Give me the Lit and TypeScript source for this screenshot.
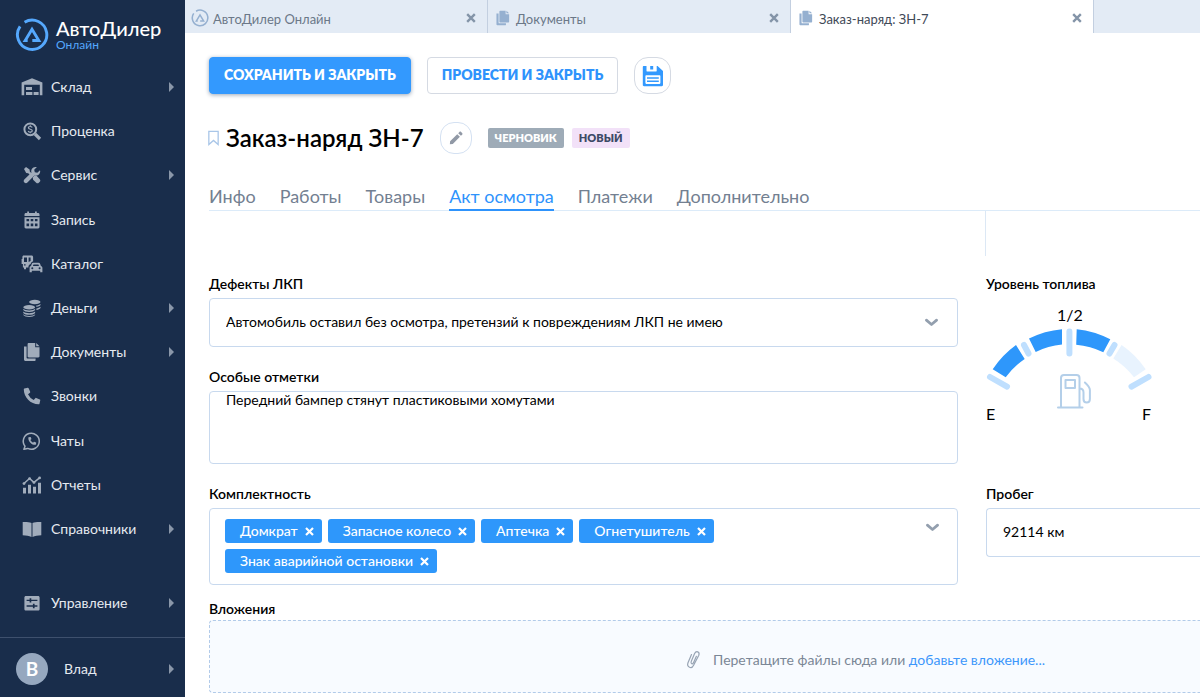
import { LitElement, html, svg, css, nothing } from "lit";
import { customElement, property } from "lit/decorators.js";
import { classMap } from "lit/directives/class-map.js";

const phonePath =
  "M497.39 361.8l-112-48a24 24 0 0 0-28 6.9l-49.6 60.6A370.66 370.66 0 0 1 130.6 204.11l60.6-49.6a23.94 23.94 0 0 0 6.9-28l-48-112A24.16 24.16 0 0 0 122.6.61l-104 24A24 24 0 0 0 0 48c0 256.5 207.9 464 464 464a24 24 0 0 0 23.4-18.6l24-104a24.29 24.29 0 0 0-14.01-27.6z";

// All glyphs share a 22x22 grid and take their colour from the text.
const glyphs: Record<string, unknown> = {
  warehouse: svg`
    <path d="M.6 19.2V6.6L11 2.2l10.400 4.400v12.600h-2.600V8.800H3.200v10.400z"/>
    <path d="M5 11h6v3H5zM5 16h6.400v3H5zM12.600 16h5v3h-5z"/>`,
  search: svg`
    <circle cx="9.300" cy="9.300" r="5.900" fill="none" stroke="currentColor" stroke-width="2"/>
    <path d="M14 14l5 5" stroke="currentColor" stroke-width="3.200" stroke-linecap="butt"/>
    <path d="M11.200 7.500c-.4-.8-1.100-1-1.900-1-1 0-1.900.4-1.900 1.300 0 2 3.900.9 3.900 3 0 .9-.9 1.400-2 1.400-.9 0-1.700-.3-2.100-1.200M9.300 5.300v1.200M9.300 12v1.300" fill="none" stroke="currentColor" stroke-width="1.200"/>`,
  tools: svg`
    <path d="M3 5l2-2 3.600 2.600.2 2 2.900 2.900-1.600 1.600-2.900-2.900-2-.2z"/>
    <path d="M12.600 12.600l1-1 2.200.4 3 3.200c.7.8.7 1.800 0 2.600l-1 1c-.8.700-1.800.7-2.600 0l-3.100-3.100-.4-2.200z"/>
    <path d="M19 6.200l-2.700 2.600-2.500-.6-.6-2.500 2.700-2.600c-2-.6-4.100.1-5.100 1.800-.7 1.200-.7 2.500-.3 3.700l-7.200 6.900c-.8.800-.8 2.100 0 2.900l.2.200c.8.800 2.100.8 2.900 0l7-7.100c1.300.4 2.700.2 3.900-.6 1.600-1.100 2.300-2.900 1.700-4.700z"/>`,
  calendar: svg`
    <path fill-rule="evenodd" d="M3.500 8.300h15v9.700c0 .800-.6 1.400-1.400 1.400H4.900c-.8 0-1.400-.6-1.400-1.400zM5.500 10v2.300h2.600V10zm4.200 0v2.300h2.600V10zm4.200 0v2.300h2.600V10zM5.500 14.500v2.700h2.600v-2.700zm4.200 0v2.700h2.600v-2.700zm4.200 0v2.700h2.600v-2.700z"/>
    <path d="M3.500 7V5.400c0-.8.600-1.400 1.400-1.400h1.300V2.400h1.800V4h6V2.400h1.800V4h1.300c.8 0 1.400.6 1.400 1.400V7z"/>`,
  cars: svg`
    <path fill-rule="evenodd" d="M2.700 2.400h7.800c1 0 1.600.7 1.600 1.600v4.200c-1.300.5-2 1.500-2.500 2.700-1.500.6-2.200 1.600-2.200 3.200v.4H5v1.700H3v-1.700H1.900V11H.6V6h.8V4c0-.9.4-1.600 1.300-1.600zM3 4.600V9h3V4.600zm4.600 0V9l2-.900V4.600zM3 11.300v1.300h1.600v-1.300z"/>
    <path fill-rule="evenodd" d="M12.300 9.700h5.200c.8 0 1.400.4 1.700 1.200l.7 2c.9.300 1.500 1 1.500 1.900v4.400h-2.200v-1.500h-8.400v1.500H8.600v-4.400c0-.9.500-1.600 1.400-1.900l.7-2c.3-.8.8-1.200 1.600-1.200zm.2 1.700l-.6 1.600h6.100l-.6-1.600zM11.300 14.200a1 1 0 1 0 0 2 1 1 0 0 0 0-2zm7.300 0a1 1 0 1 0 0 2 1 1 0 0 0 0-2z"/>`,
  coins: svg`
    <ellipse cx="13.800" cy="5" rx="5.700" ry="2.200"/>
    <ellipse cx="8.200" cy="10.200" rx="5.900" ry="2.200"/>
    <path d="M2.300 11.800c2 2.100 9.800 2.100 11.800 0v1.300c-1.500 2.600-10.300 2.600-11.800 0zM2.300 14.600c2 2.100 9.800 2.100 11.800 0v1.300c-1.500 2.600-10.300 2.600-11.800 0zM2.300 17.300c2 2.100 9.800 2.100 11.800 0v.700c-1.500 2.600-10.300 2.600-11.800 0zM15.200 8.500c1.800-.2 3.400-.7 4.300-1.600v1.200c-.6 1-2.100 1.600-4 1.900zM15.400 11.400c1.700-.2 3.200-.7 4.100-1.600V11c-.6 1-2.200 1.700-4.100 2z"/>`,
  copy: svg`
    <path d="M7.800 2h6.400v4.300h4.300v8.900c0 .700-.5 1.200-1.200 1.200H7.800c-.7 0-1.200-.5-1.200-1.200v-12C6.600 2.500 7.100 2 7.800 2z"/>
    <path d="M15.200 2l3.300 3.300h-3.300zM3.200 5.400h2.400v11.400c0 .4.300.7.700.7h8.300v1.700c0 .500-.4.800-.8.800H4.500c-.8 0-1.500-.7-1.500-1.500V5.600z"/>`,
  phone: svg`<path transform="translate(2.800 2.800) scale(.0322)" d="${phonePath}"/>`,
  chat: svg`
    <path d="M4 16.200A8 8 0 1 1 6.700 18.400L2.900 19.300z" fill="none" stroke="currentColor" stroke-width="1.500" stroke-linejoin="round"/>
    <path transform="translate(7.300 6.900) scale(.0155)" d="${phonePath}"/>`,
  chart: svg`
    <path d="M2 13.700h3v5.700H2zM7 10.700h3v8.700H7zM12 12.700h3v6.700h-3zM17 8.700h3v10.700h-3z"/>
    <path d="M2.600 9.800l6-5.400 4.300 4 5.700-4.600" fill="none" stroke="currentColor" stroke-width="1.500"/>
    <circle cx="3" cy="9.600" r="1.400"/><circle cx="8.600" cy="4.600" r="1.400"/><circle cx="13" cy="8.400" r="1.400"/><circle cx="18.600" cy="3.900" r="1.400"/>`,
  book: svg`
    <path d="M10.500 5v14c-2.500-1.300-5.300-1.700-8.800-1.800V4.100c3.500-.1 6.500 0 8.800.9zM11.500 5v14c2.500-1.300 5.300-1.700 8.800-1.800V4.100c-3.500-.1-6.500 0-8.800.9z"/>`,
  sliders: svg`
    <path fill-rule="evenodd" d="M5 3.900h12c1 0 1.600.6 1.600 1.600v11.400c0 1-.6 1.600-1.600 1.600H5c-1 0-1.600-.6-1.600-1.600V5.500c0-1 .6-1.600 1.600-1.600zM5.600 7.700v1.400h3v1.500h1.700V9.100h6.100V7.700h-6.100V6.200H8.600v1.500zM5.600 13.300v1.400h6.300v1.500h1.700v-1.500h2.800v-1.400h-2.800v-1.500h-1.700v1.500z"/>`,
  brand: svg`
    <path d="M3.300 5.400A9.500 9.500 0 1 0 6.200 2.700" fill="none" stroke="currentColor" stroke-width="1.900"/>
    <path d="M8.200 14.600H6.600L11 7.300l4.400 7.300h-4.200" fill="none" stroke="currentColor" stroke-width="1.900"/>`,
  save: svg`
    <path fill-rule="evenodd" d="M1.800 1h2.700v4.700c0 .5.400.9.900.9h8.400c.5 0 .9-.4.900-.9V1h.9L21 6v14c0 .7-.5 1.200-1.200 1.200H2c-.7 0-1.200-.5-1.200-1.200V2.200C.8 1.500 1.200 1 1.800 1zM4.200 10.300c-.5 0-.8.300-.8.800v7c0 .5.300.8.800.8h13.400c.5 0 .8-.3.800-.8v-7c0-.5-.3-.8-.8-.8z"/>
    <path d="M8.200 1h3v3.600h-3zM5 12.300h11.800v1.500H5zM5 15.500h11.800V17H5z"/>`,
  pencil: svg`
    <path d="M3.500 18.700l.3-3.700L12.500 6.300l3.300 3.300L7.100 18.300zM13.700 5.100l1.500-1.500c.6-.6 1.400-.6 2 0l1.300 1.300c.6.6.6 1.400 0 2L17 8.400z"/>`,
  bookmark: svg`
    <path d="M5.600 3.400h10.800v15.200L11 13.800l-5.400 4.800z" fill="none" stroke="currentColor" stroke-width="1.500"/>`,
  clip: svg`
    <path d="M8.500 5.500L5 13.800c-1.600 4.400 3.600 6.600 5.600 2.400L15.800 6.300c1.300-3.600-2.600-5-4.200-1.700L8.300 12.200c-1 2.700 1.300 3.500 2.300 1.300l2.800-6.200" transform="translate(1 0)" fill="none" stroke="currentColor" stroke-width="1.200" stroke-linecap="round"/>`,
  close: svg`<path d="M4 4l14 14M18 4L4 18" stroke="currentColor" stroke-width="4.400"/>`,
  chevron: svg`<path d="M3.500 7.500L11 14l7.500-6.500" fill="none" stroke="currentColor" stroke-width="4" stroke-linecap="round" stroke-linejoin="round"/>`,
};

const icon = (name: string, cls = "") =>
  html`<svg class="icon ${cls}" viewBox="0 0 22 22" fill="currentColor" aria-hidden="true">${glyphs[name]}</svg>`;

const base = css`
  *, *::before, *::after { box-sizing: border-box; }
  button, input, select, textarea { font: inherit; color: inherit; margin: 0; }
  button { border: 0; background: none; padding: 0; cursor: pointer; }
  a { color: inherit; text-decoration: none; }
  .icon { display: block; flex: none; width: 22px; height: 22px; }
`;

@customElement("app-sidebar")
class AppSidebar extends LitElement {
  static styles = [base, css`
    :host {
      display: flex; flex-direction: column; min-height: 100vh;
      background: #192d4b; color: #e6eaf0; font-size: 14px;
    }
    .brand { display: flex; align-items: center; gap: 7px; height: 65px; padding: 5px 0 0 15px; color: #55a8fd; }
    .logo { width: 34px; height: 34px; }
    .name { display: flex; flex-direction: column; padding-top: 4px; }
    .title { color: #fff; font-size: 20px; line-height: 16px; font-weight: 500; }
    .sub { font-size: 12px; line-height: 18px; }
    .nav { flex: 1; display: flex; flex-direction: column; }
    .link { flex: 1; display: flex; align-items: center; gap: 8px; min-height: 44px; padding: 0 11px 0 21px; }
    .label { flex: 1; }
    .link .icon { color: #a1acbb; }
    .arrow { width: 0; height: 0; border: 5px solid transparent; border-left-color: #8a97a9; border-right: 0; }
    .manage { display: flex; margin-top: 30px; padding-bottom: 12px; }
    .user { display: flex; align-items: center; gap: 16px; height: 60px; padding: 3px 11px 0 16px; border-top: 1px solid #3e506d; }
    .avatar {
      display: grid; place-items: center; width: 32px; height: 32px; border-radius: 50%;
      background: #96a8bf; color: #fff; font-size: 19px; font-weight: 700;
    }
  `];

  private items: [string, string, boolean][] = [
    ["warehouse", "Склад", true], ["search", "Проценка", false], ["tools", "Сервис", true],
    ["calendar", "Запись", false], ["cars", "Каталог", false], ["coins", "Деньги", true],
    ["copy", "Документы", true], ["phone", "Звонки", false], ["chat", "Чаты", false],
    ["chart", "Отчеты", false], ["book", "Справочники", true],
  ];

  private link([glyph, label, nested]: [string, string, boolean]) {
    return html`<a class="link" href="#">
      ${icon(glyph)}<span class="label">${label}</span>${nested ? html`<span class="arrow"></span>` : nothing}
    </a>`;
  }

  render() {
    return html`
      <a class="brand" href="#">
        ${icon("brand", "logo")}
        <span class="name"><span class="title">АвтоДилер</span><span class="sub">Онлайн</span></span>
      </a>
      <nav class="nav">${this.items.map((i) => this.link(i))}</nav>
      <div class="manage">${this.link(["sliders", "Управление", true])}</div>
      <a class="user" href="#">
        <span class="avatar">В</span><span class="label">Влад</span><span class="arrow"></span>
      </a>`;
  }
}

@customElement("window-tabs")
class WindowTabs extends LitElement {
  static styles = [base, css`
    :host { display: flex; height: 33px; background: #e3ebf5; color: #6b7888; font-size: 13px; }
    .tab { display: flex; flex: 0 1 303px; min-width: 0; align-items: center; gap: 4px; padding: 3px 10px 0 6px; border-right: 1px solid #c3cfe0; }
    .tab .icon { width: 18px; height: 18px; color: #95b0d0; }
    .active { background: #fff; color: #3f4a57; }
    .name { flex: 1; padding-top: 2px; text-align: left; }
    .close .icon { width: 12px; height: 12px; color: #8494a8; }
  `];

  private tabs: [string, string][] = [
    ["brand", "АвтоДилер Онлайн"], ["copy", "Документы"], ["copy", "Заказ-наряд: ЗН-7"],
  ];

  render() {
    return this.tabs.map(([glyph, name], i) => html`
      <div class=${classMap({ tab: true, active: i === 2 })}>
        ${icon(glyph)}<button class="name">${name}</button>
        <button class="close" aria-label="Закрыть">${icon("close")}</button>
      </div>`);
  }
}

@customElement("fuel-gauge")
class FuelGauge extends LitElement {
  @property() level = "1/2";

  static styles = css`
    :host { display: block; margin-top: 6px; }
    .gauge { display: block; width: 166px; height: 120px; }
    .fill { fill: #2e97fb; }
    .rest { fill: #e8f3fe; }
    .tick { stroke: #bfdffe; stroke-width: 6; stroke-linecap: round; }
    .pump { fill: none; stroke: #b4cfe9; stroke-width: 2; stroke-linecap: round; stroke-linejoin: round; }
    .text { font-size: 16px; fill: #000; }
  `;

  render() {
    return html`<svg class="gauge" viewBox="0 0 166 120" role="img" aria-label="Уровень топлива">
      <path class="fill" d="M6.700 65.300A93 93 0 0 1 30 41L38.700 55A77 77 0 0 0 19.700 73.300z"/>
      <path class="fill" d="M43 34.500A93 93 0 0 1 76 25.200V40.600A77 77 0 0 0 49.700 48z"/>
      <path class="fill" d="M90.700 25.200A93 93 0 0 1 124.300 35.300L117.300 48.300A77 77 0 0 0 90.200 40.800z"/>
      <path class="rest" d="M135.600 41A93 93 0 0 1 159.700 65.300L148 73.300A77 77 0 0 0 127.300 54.500z"/>
      <path class="tick" d="M4 73L21 82.600M38 41L42.500 49.500M83.400 27.500V49.500M128.500 41L123.500 49.500M162.500 73L145.500 82.600"/>
      <path class="pump" d="M75 103V74q0-3 3-3h12.500q3 0 3 3v29M72 103.500h24.500M79.500 76h9.500v8h-9.500zM93.500 84.500q4 0 4 4v6.500q0 3.500 3.200 3.500t3.200-3.500v-9q0-3-5-7.500"/>
      <text class="text" x="84" y="17" text-anchor="middle">${this.level}</text>
      <text class="text" x="0" y="116">E</text>
      <text class="text" x="156" y="116">F</text>
    </svg>`;
  }
}

@customElement("app-root")
class AppRoot extends LitElement {
  static styles = [base, css`
    :host {
      display: grid; grid-template-columns: 185px minmax(0, 1fr); min-height: 100vh;
      background: #fff; color: #000; font-family: Lato, "Noto Sans", sans-serif; font-size: 14px; line-height: 20px;
      overflow-x: hidden;
    }
    .page { padding: 24px 0 4px 24px; }
    .actions { display: flex; gap: 16px; }
    .btn { height: 37px; padding: 0 14px 1px; border: 1px solid #d5dae3; border-radius: 4px; color: #2e93fc; font-size: 14px; font-weight: 800; }
    .primary { border-color: #3399fe; background: #3399fe; color: #fff; box-shadow: 0 1px 4px #9aa7b8; }
    .round { display: grid; place-items: center; width: 37px; height: 37px; border: 1px solid #d5dae3; border-radius: 14px; color: #3399fe; }
    .head { display: flex; align-items: center; height: 32px; margin-top: 28px; }
    .mark { margin-left: -5px; color: #a9c6e8; }
    .mark .icon { width: 19px; height: 22px; }
    .title { margin: 0 16px 0 3px; font-size: 24px; line-height: 32px; font-weight: 600; }
    .edit { width: 32px; height: 32px; border-color: #d4e1f2; color: #9199a6; }
    .edit .icon { width: 18px; height: 18px; }
    .badge { height: 20px; padding: 0 7px; margin-left: 8px; border-radius: 2px; font-size: 11px; line-height: 20px; font-weight: 800; }
    .draft { margin-left: 16px; background: #9eabb7; color: #fff; }
    .new { background: #f2e1f8; color: #3d4a66; }
    .tabs { display: flex; gap: 24px; margin-top: 31px; border-bottom: 1px solid #dcebf9; color: #738091; font-size: 18px; line-height: 22px; }
    .tab { height: 26px; margin-bottom: -1px; border-bottom: 2px solid transparent; }
    .current { color: #2e93fc; border-color: #2e93fc; }
    .grid { display: grid; grid-template-columns: minmax(0, 7fr) minmax(0, 2fr); column-gap: 28px; }
    .divider { grid-column: 2; height: 45px; margin-left: -1px; border-left: 1px solid #dce8f5; }
    .field { display: flex; flex-direction: column; min-width: 0; }
    .label { height: 24px; font-weight: 600; }
    .first { margin-top: 18px; }
    .box { position: relative; border: 1px solid #c8d9ee; border-radius: 4px; background: #fff; }
    .control { display: block; width: 100%; height: 47px; padding: 0 16px 2px; border: 0; background: none; appearance: none; outline: 0; }
    .notes { height: 71px; line-height: 16px; resize: none; }
    .caret { position: absolute; top: 16px; right: 18px; width: 15px; height: 15px; color: #939fae; pointer-events: none; }
    .gap { margin-top: 20px; }
    .bleed { border-right: 0; border-radius: 4px 0 0 4px; }
    .tags { display: flex; flex-wrap: wrap; gap: 6px; padding: 10px 60px 11px 15px; }
    .tags .caret { top: 11px; right: 17px; }
    .tag { display: flex; align-items: center; gap: 6px; height: 24px; padding: 0 7px 0 15px; border-radius: 3px; background: #2e97fb; color: #fff; font-weight: 500; }
    .tag .icon { width: 11px; height: 11px; }
    .attach { margin-top: 14px; }
    .attach .label { height: 21px; }
    .drop {
      display: flex; justify-content: center; align-items: center; gap: 9px; height: 73px; padding: 6px 0 0 32%;
      border: 1px dashed #b2cbe9; border-right: 0; border-radius: 4px 0 0 4px; background: #f8fbff; color: #7b8796;
    }
    .drop .icon { color: #98a4b4; }
    .add { color: #3d97fb; }
  `];

  private sections = ["Инфо", "Работы", "Товары", "Акт осмотра", "Платежи", "Дополнительно"];
  private kit = ["Домкрат", "Запасное колесо", "Аптечка", "Огнетушитель", "Знак аварийной остановки"];

  render() {
    return html`
      <app-sidebar></app-sidebar>
      <main>
        <window-tabs></window-tabs>
        <div class="page">
          <div class="actions">
            <button class="btn primary">СОХРАНИТЬ И ЗАКРЫТЬ</button>
            <button class="btn">ПРОВЕСТИ И ЗАКРЫТЬ</button>
            <button class="round" aria-label="Сохранить">${icon("save")}</button>
          </div>
          <div class="head">
            <button class="mark" aria-label="В закладки">${icon("bookmark")}</button>
            <h1 class="title">Заказ-наряд ЗН-7</h1>
            <button class="round edit" aria-label="Изменить">${icon("pencil")}</button>
            <span class="badge draft">ЧЕРНОВИК</span>
            <span class="badge new">НОВЫЙ</span>
          </div>
          <nav class="tabs">
            ${this.sections.map((s, i) => html`<a href="#" class=${classMap({ tab: true, current: i === 3 })}>${s}</a>`)}
          </nav>
          <div class="grid">
            <div class="divider"></div>
            <div class="field first">
              <label class="label" for="paint">Дефекты ЛКП</label>
              <div class="box">
                <select class="control" id="paint">
                  <option>Автомобиль оставил без осмотра, претензий к повреждениям ЛКП не имею</option>
                </select>
                ${icon("chevron", "caret")}
              </div>
              <label class="label gap" for="notes">Особые отметки</label>
              <div class="box">
                <textarea class="control notes" id="notes" .value=${"Передний бампер стянут пластиковыми хомутами"}></textarea>
              </div>
            </div>
            <div class="field first">
              <span class="label">Уровень топлива</span>
              <fuel-gauge level="1/2"></fuel-gauge>
            </div>
            <div class="field gap">
              <span class="label" id="kit">Комплектность</span>
              <div class="box tags" role="group" aria-labelledby="kit">
                ${this.kit.map((k) => html`<button class="tag">${k}${icon("close")}</button>`)}
                ${icon("chevron", "caret")}
              </div>
            </div>
            <div class="field gap">
              <label class="label" for="mileage">Пробег</label>
              <div class="box bleed"><input class="control" id="mileage" value="92114 км"></div>
            </div>
          </div>
          <div class="field attach">
            <span class="label">Вложения</span>
            <div class="drop">${icon("clip")}<span>Перетащите файлы сюда или <a class="add" href="#">добавьте вложение...</a></span></div>
          </div>
        </div>
      </main>`;
  }
}
